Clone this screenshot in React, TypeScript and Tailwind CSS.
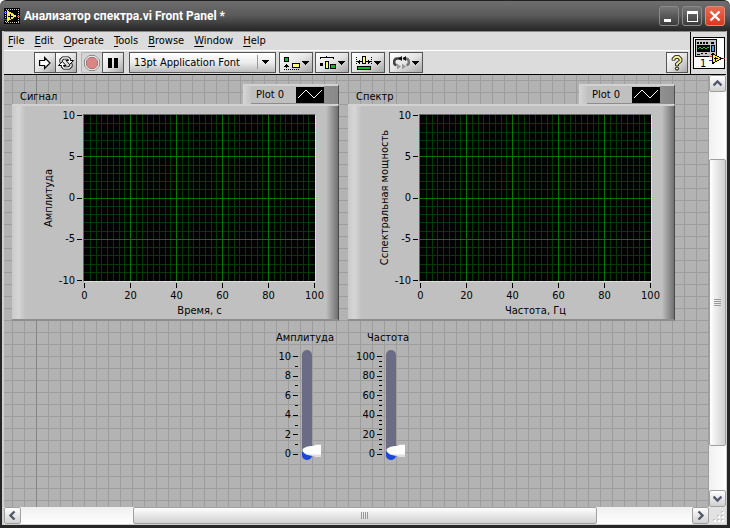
import { useState } from "react";
import type { ReactNode } from "react";
import { clsx } from "clsx";

const MENU = ["File", "Edit", "Operate", "Tools", "Browse", "Window", "Help"];

const BUTTON =
  "flex h-[21px] items-center justify-center border border-[#555] bg-linear-to-br from-white via-[#e4e4e4] to-[#a8a8a8]";

function AppIcon() {
  return (
    <svg width="16" height="16" viewBox="0 0 16 16" shapeRendering="crispEdges" aria-hidden="true">
      <path d="M0 0h16v16H0z" fill="#000" />
      <path d="M1.5 1.5h13v13h-13z" fill="none" stroke="#c8c8c8" strokeDasharray="1 1" />
      <path d="M0 4h3M0 11h3" stroke="#2040ff" />
      <path d="M13 8.5h3" stroke="#f02020" />
      <path d="M3 2v12l10-6z" fill="#ffee30" />
      <path d="M4 8h5M6.5 5.5v5" stroke="#000" />
    </svg>
  );
}

function ViIcon() {
  return (
    <svg width="32" height="32" viewBox="0 0 32 32" shapeRendering="crispEdges" aria-hidden="true">
      <path d="M.5.5h31v31H.5z" fill="#fff" stroke="#000" />
      <path d="M2.5 2.5h21v17h-21z" fill="#c4c4c4" stroke="#000" />
      <path d="M4 6h2M7 6h2M10 6h2M13 6h2M18 6h3" stroke="#000" strokeWidth="2" />
      <path d="M4 8h13v7H4z" fill="#000" />
      <path d="M5 12l2-2 2 2 2-2 2 2 2-2 1 1" fill="none" stroke="#20c030" />
      <path d="M18.5 8.5h3v6h-3z" fill="#38a0f0" stroke="#000" />
      <path d="M4 17.5h3M8 16.5h2M12 16.5h2M18 17.5h3" stroke="#000" />
      <text x="7" y="30" fontSize="11">
        1
      </text>
      <path d="M16 19.5h4M28 21.5h4" stroke="#f03020" />
      <path d="M16 23.5h4" stroke="#2030f0" />
      <path d="M19.5 16.5v10l9-5z" fill="#ffee20" stroke="#000" />
      <path d="M21 21.5h4M22.5 19.5v4" stroke="#000" />
    </svg>
  );
}

function DropArrow() {
  return (
    <svg width="7" height="4" viewBox="0 0 7 4" shapeRendering="crispEdges" aria-hidden="true">
      <path d="M0 0h7v1H0zM1 1h5v1H1zM2 2h3v1H2zM3 3h1v1H3z" fill="#000" />
    </svg>
  );
}

function RunIcon() {
  return (
    <svg width="12" height="14" viewBox="0 0 12 14" aria-hidden="true">
      <path d="M.6 4.5h5v-3L11 7l-5.400 5.500v-3h-5z" fill="#fff" stroke="#000" strokeWidth="1.200" />
    </svg>
  );
}

function RunLoopIcon() {
  return (
    <svg width="16" height="16" viewBox="0 0 16 16" aria-hidden="true">
      <path d="M3 7.500V5l2-2h5l1.500 1.500V6M13 8.500V11l-2 2H6l-1.500-1.500V10" fill="none" stroke="#000" strokeWidth="3.200" />
      <path d="M8 5.500h7.500L11.700 9.500zM.500 10.500L4.300 6.500 8 10.500z" fill="#fff" stroke="#000" />
      <path d="M3 7V5l2-2h5l1.500 1.500V7M13 9v2l-2 2H6l-1.500-1.500V9" fill="none" stroke="#fff" strokeWidth="1.400" />
    </svg>
  );
}

function AbortIcon() {
  return (
    <svg width="16" height="16" viewBox="0 0 16 16" aria-hidden="true">
      <path d="M5 .5h6L15.500 5v6L11 15.500H5L.5 11V5z" fill="#e4e4e4" stroke="#8c8c8c" />
      <path d="M5.700 2.500h4.600l3.200 3.200v4.600l-3.200 3.200H5.700l-3.200-3.200V5.700z" fill="#dc8484" stroke="#a07878" />
    </svg>
  );
}

function AlignIcon() {
  return (
    <svg width="16" height="14" viewBox="0 0 16 14" shapeRendering="crispEdges" aria-hidden="true">
      <path d="M.5 1.500h4v4h-4z" fill="#00c020" stroke="#000" />
      <path d="M8.500 7.500h7v4h-7z" fill="#ffff70" stroke="#000" />
      <path d="M2.500 8v4M1 9.500h3M0 10.500h5" stroke="#000" />
      <path d="M0 13.500h16" stroke="#000" strokeDasharray="1 1" />
    </svg>
  );
}

function DistributeIcon() {
  return (
    <svg width="16" height="14" viewBox="0 0 16 14" shapeRendering="crispEdges" aria-hidden="true">
      <path d="M.5 3V1.500h6V0M6.500 1.500h7V3" fill="none" stroke="#000" />
      <path d="M0 7h3v3H0z" fill="#000" />
      <path d="M5.500 5.500h3v7h-3z" fill="#ffff70" stroke="#000" />
      <path d="M10.500 8.500h5v4h-5z" fill="#00c020" stroke="#000" />
    </svg>
  );
}

function ResizeIcon() {
  return (
    <svg width="16" height="14" viewBox="0 0 16 14" shapeRendering="crispEdges" aria-hidden="true">
      <path d="M.5 1v8M15.500 1v8" stroke="#000" strokeDasharray="1 1" />
      <path d="M1 5.500h5M10 5.500h5M3.500 3.500v4M2.500 4.500v2M12.500 3.500v4M13.500 4.500v2" stroke="#000" />
      <path d="M6.500.5h3v7h-3z" fill="#ffff70" stroke="#000" />
      <path d="M1.500 10.500h13v3h-13z" fill="#00c020" stroke="#000" />
    </svg>
  );
}

function ReorderIcon() {
  return (
    <svg width="17" height="14" viewBox="0 0 17 14" aria-hidden="true">
      <path d="M7 2.500H5a3.500 3.500 0 0 0-1.500 6.800" fill="none" stroke="#444" strokeWidth="2.600" />
      <path d="M10 2.500h2a3.500 3.500 0 0 1 1.500 6.800" fill="none" stroke="#777" strokeWidth="2.600" />
      <path d="M9 0v5L5 2.500zM13 0v5L9.500 2.500z" fill="#111" />
      <path d="M4 7.500v6L8 10.500zM9 7.500v6l4-3z" fill="#999" />
    </svg>
  );
}

function HelpIcon() {
  return (
    <svg width="12" height="16" viewBox="0 0 12 16" aria-hidden="true">
      <path d="M2.500 5.500V4l2-2h3l2 2v2L6 9v2" fill="none" stroke="#000" strokeWidth="3.600" />
      <path d="M2.500 5V4l2-2h3l2 2v2L6 9v1.500" fill="none" stroke="#f5ee90" strokeWidth="2" />
      <circle cx="6" cy="13.500" r="1.600" fill="#f5ee90" stroke="#000" />
    </svg>
  );
}

function TitleBar() {
  const control =
    "flex h-5 w-5 items-center justify-center rounded-[3px] border border-[#8a8a8a] bg-linear-to-b from-[#777] to-[#3c3c3c]";
  return (
    <header className="flex h-[31px] shrink-0 items-center rounded-t-md border-t border-[#222] bg-linear-to-b from-[#6e6e6e] from-0% via-[#5a5a5a] via-48% to-[#262626] to-100% pr-[5px] pl-1">
      <AppIcon />
      <h1 className="ml-1 flex-1 font-[Roboto,'Noto_Sans',sans-serif] text-[12px] font-bold whitespace-nowrap text-white">
        Анализатор спектра.vi Front Panel *
      </h1>
      <div className="flex gap-[3px]">
        <button type="button" aria-label="Minimize" className={control}>
          <span className="mt-2 mr-1 h-[3px] w-[7px] bg-white" />
        </button>
        <button type="button" aria-label="Maximize" className={control}>
          <span className="h-[11px] w-[11px] border border-t-3 border-white" />
        </button>
        <button
          type="button"
          aria-label="Close"
          className="flex h-5 w-5 items-center justify-center rounded-[3px] border border-[#e08a78] bg-linear-to-b from-[#e86a50] to-[#d8381c]"
        >
          <svg width="12" height="12" viewBox="0 0 12 12" aria-hidden="true">
            <path d="M1.500 1.500l9 9M10.500 1.500l-9 9" stroke="#fff" strokeWidth="2.400" />
          </svg>
        </button>
      </div>
    </header>
  );
}

function MenuBar() {
  return (
    <nav className="flex h-[19px] items-center gap-[10px] border-b border-white pl-1">
      {MENU.map((item) => (
        <button key={item} type="button">
          <span className="underline underline-offset-2">{item[0]}</span>
          {item.slice(1)}
        </button>
      ))}
    </nav>
  );
}

function DropButton({ label, children }: { label: string; children: ReactNode }) {
  return (
    <button type="button" aria-label={label} className={clsx(BUTTON, "w-[34px] gap-[2px]")}>
      {children}
      <DropArrow />
    </button>
  );
}

function Toolbar() {
  return (
    <div className="flex h-[23px] items-center pr-[2px] pl-[30px]">
      <button type="button" aria-label="Run" className={clsx(BUTTON, "w-[22px]")}>
        <RunIcon />
      </button>
      <button type="button" aria-label="Run continuously" className={clsx(BUTTON, "-ml-px w-[22px]")}>
        <RunLoopIcon />
      </button>
      <button
        type="button"
        aria-label="Abort"
        disabled
        className="ml-1 flex h-[21px] w-[22px] items-center justify-center border border-[#b4b4b4] bg-[#d4d4d4]"
      >
        <AbortIcon />
      </button>
      <button type="button" aria-label="Pause" className={clsx(BUTTON, "-ml-px w-[22px] gap-[2px]")}>
        <span className="h-[10px] w-1 bg-black" />
        <span className="h-[10px] w-1 bg-black" />
      </button>
      <div className="relative ml-[5px]">
        <select
          aria-label="Text settings"
          className="h-[21px] w-[147px] appearance-none border border-[#555] bg-linear-to-b from-white via-[#ececec] to-[#bdbdbd] pl-1"
        >
          <option>13pt Application Font</option>
        </select>
        <span className="pointer-events-none absolute top-[3px] right-[7px] flex h-[14px] items-center border-l border-[#999] pl-1">
          <DropArrow />
        </span>
      </div>
      <div className="ml-[3px] flex gap-[2px]">
        <DropButton label="Align objects">
          <AlignIcon />
        </DropButton>
        <DropButton label="Distribute objects">
          <DistributeIcon />
        </DropButton>
        <DropButton label="Resize objects">
          <ResizeIcon />
        </DropButton>
      </div>
      <div className="ml-1 flex">
        <DropButton label="Reorder">
          <ReorderIcon />
        </DropButton>
      </div>
      <button type="button" aria-label="Context help" className={clsx(BUTTON, "ml-auto w-[22px]")}>
        <HelpIcon />
      </button>
    </div>
  );
}

const Y_TICKS = [10, 5, 0, -5, -10];
const X_TICKS = [0, 20, 40, 60, 80, 100];

function PlotGrid() {
  const cols = Array.from({ length: 41 }, (_, i) => i);
  const rows = Array.from({ length: 21 }, (_, i) => i);
  const line = (pos: number, vertical: boolean, major: boolean) => (
    <rect
      key={`${vertical}-${pos}`}
      x={vertical ? pos : 0}
      y={vertical ? 0 : pos}
      width={vertical ? 1 : 231}
      height={vertical ? 166 : 1}
      fill={major ? "#007800" : "#003c00"}
    />
  );
  const minor = (step: number) => (i: number) => i % step !== 0;
  const major = (step: number, last: number) => (i: number) => i % step === 0 && i > 0 && i < last;

  return (
    <svg width="231" height="166" shapeRendering="crispEdges" className="block bg-black" role="img" aria-label="Plot area">
      {cols.filter(minor(8)).map((i) => line(Math.round(i * 5.75), true, false))}
      {rows.filter(minor(5)).map((i) => line(Math.round(i * 8.25), false, false))}
      {cols.filter(major(8, 40)).map((i) => line(Math.round(i * 5.75), true, true))}
      {rows.filter(major(5, 20)).map((i) => line(Math.round(i * 8.25), false, true))}
    </svg>
  );
}

function Legend() {
  return (
    <div className="flex h-5 w-24 items-center border-t-2 border-r border-t-[#d2d2d2] border-r-[#505050] bg-linear-to-r from-[#d6d6d6] from-0% via-[#c0c0c0] via-10% to-[#888] to-100%">
      <div className="ml-2 flex h-full w-[73px] items-center justify-between border-b border-[#8c8c8c] bg-[#c0c0c0] pl-[5px]">
        <span>Plot 0</span>
        <svg width="28" height="16" viewBox="0 0 28 16" aria-hidden="true">
          <path d="M0 0h28v16H0z" fill="#000" />
          <path d="M2 11l8-8 8 8 8-8" fill="none" stroke="#fff" />
        </svg>
      </div>
    </div>
  );
}

interface GraphProps {
  title: string;
  xLabel: string;
  yLabel: string;
}

function Graph({ title, xLabel, yLabel }: GraphProps) {
  return (
    <section className="w-[327px] shrink-0">
      <div className="flex h-5 items-end justify-between">
        <h2 className="pl-2">{title}</h2>
        <Legend />
      </div>
      <div className="flex border-t-2 border-r border-b-2 border-t-[#d2d2d2] border-r-[#484848] border-b-[#8e8e8e] bg-[#c0c0c0]">
        <div className="w-[13px] bg-linear-to-r from-[#cacaca] via-[#d6d6d6] to-[#c2c2c2]" />
        <div className="flex flex-1 justify-end pt-2 pr-[10px] pb-px">
          <div className="flex h-[168px] w-3 items-center justify-center">
            <span className="rotate-180 leading-3 whitespace-nowrap [writing-mode:vertical-rl]">{yLabel}</span>
          </div>
          <div className="mt-px mr-px flex h-[166px] w-[27px] flex-col justify-between">
            {Y_TICKS.map((t) => (
              <div key={t} className="flex h-px items-center justify-end gap-[2px]">
                <span className="leading-3">{t}</span>
                <span className="h-px w-[5px] bg-black" />
              </div>
            ))}
          </div>
          <div>
            <div className="border border-t-[#666] border-r-[#dedede] border-b-[#dedede] border-l-[#666]">
              <PlotGrid />
            </div>
            <div className="mt-px flex justify-between px-px">
              {X_TICKS.map((t) => (
                <div key={t} className="flex w-px flex-col items-center">
                  <span className="h-[5px] w-px bg-black" />
                  <span className="leading-[15px]">{t}</span>
                </div>
              ))}
            </div>
            <p className="text-center leading-[15px]">{xLabel}</p>
          </div>
        </div>
        <div className="w-[12px] bg-linear-to-r from-[#c0c0c0] to-[#707070]" />
      </div>
    </section>
  );
}

interface SliderProps {
  id: string;
  label: string;
  max: number;
  divisions: number;
}

function Slider({ id, label, max, divisions }: SliderProps) {
  const [value, setValue] = useState(0);
  const count = 5 * divisions;
  const ticks = Array.from({ length: count + 1 }, (_, i) => count - i);
  const level = (value / max) * 98;

  return (
    <div className="w-14">
      <label htmlFor={id} className="block h-[19px] text-center leading-[14px] whitespace-nowrap">
        {label}
      </label>
      <div className="flex h-[110px]">
        <div className="mt-[6px] mr-1 flex h-[99px] w-[22px] flex-col justify-between">
          {ticks.map((i) => {
            const isMajor = i % divisions === 0;
            return (
              <div key={i} className="flex h-px items-center justify-end gap-[2px]">
                {isMajor && <span className="leading-3">{(i / count) * max}</span>}
                <span className={clsx("h-px shrink-0 bg-black", isMajor ? "w-[5px]" : "w-[3px]")} />
              </div>
            );
          })}
        </div>
        <div className="relative h-[110px] w-[10px] rounded-full bg-[#6c6b86]">
          <div
            className="absolute bottom-0 w-full rounded-b-full bg-[#1848e0]"
            style={{ height: `${level + 8}px` }}
          />
          <svg width="19" height="14" viewBox="0 0 19 14" className="absolute left-0" style={{ bottom: `${level + 2}px` }} aria-hidden="true">
            <path d="M.500 6C1 3.500 6 2 11 2L14 .800h5V13h-5l-3-1.500C6 11.500.500 9.500.500 6z" fill="#fff" />
            <path d="M2 9c3 1 6 1.500 9 1.500h8V13h-5l-3-1.500C7 11.500 4 10.800 2 9z" fill="#dedede" />
          </svg>
          <input
            id={id}
            type="range"
            min={0}
            max={max}
            value={value}
            onChange={(e) => setValue(Number(e.target.value))}
            className="absolute inset-0 h-full w-full opacity-0 [direction:rtl] [writing-mode:vertical-lr]"
          />
        </div>
      </div>
    </div>
  );
}

function ScrollArrow({ label, d }: { label: string; d: string }) {
  return (
    <button
      type="button"
      aria-label={label}
      className="flex h-[17px] w-[17px] shrink-0 items-center justify-center rounded-xs border border-[#a0a0a0] bg-linear-to-b from-white to-[#d0d0d0]"
    >
      <svg width="9" height="9" viewBox="0 0 9 9" aria-hidden="true">
        <path d={d} fill="none" stroke="#505a6c" strokeWidth="2.400" />
      </svg>
    </button>
  );
}

function VerticalScroll() {
  return (
    <div className="flex w-[17px] flex-col bg-linear-to-r from-[#f0f0f0] to-white">
      <ScrollArrow label="Scroll up" d="M.500 6.500l4-4 4 4" />
      <div className="flex-[67]" />
      <div className="flex flex-[288] flex-col items-center justify-center gap-px rounded-xs border border-[#a0a0a0] bg-linear-to-r from-white to-[#d0d0d0]">
        {[0, 1, 2, 3].map((i) => (
          <span key={i} className="h-px w-[7px] bg-[#999]" />
        ))}
      </div>
      <div className="flex-[44]" />
      <ScrollArrow label="Scroll down" d="M.500 2.500l4 4 4-4" />
    </div>
  );
}

function HorizontalScroll() {
  return (
    <div className="flex h-[17px] shrink-0 bg-linear-to-b from-[#f0f0f0] to-white">
      <ScrollArrow label="Scroll left" d="M6.500.500l-4 4 4 4" />
      <div className="flex-[112]" />
      <div className="flex h-[17px] flex-[465] items-center justify-center gap-px rounded-xs border border-[#a0a0a0] bg-linear-to-b from-white to-[#d0d0d0]">
        {[0, 1, 2, 3].map((i) => (
          <span key={i} className="h-[7px] w-px bg-[#999]" />
        ))}
      </div>
      <div className="flex-[95]" />
      <ScrollArrow label="Scroll right" d="M2.500.500l4 4-4 4" />
      <div className="flex w-[17px] items-end justify-end bg-[#e2e2e2]">
        <svg width="14" height="14" viewBox="0 0 14 14" shapeRendering="crispEdges" aria-hidden="true">
          <path d="M9 1h2v2H9zM9 5h2v2H9zM5 5h2v2H5zM9 9h2v2H9zM5 9h2v2H5zM1 9h2v2H1z" fill="#c4c4c4" />
          <path d="M10 2h2v2h-2zM10 6h2v2h-2zM6 6h2v2H6zM10 10h2v2h-2zM6 10h2v2H6zM2 10h2v2H2z" fill="#fff" />
        </svg>
      </div>
    </div>
  );
}

export default function App() {
  return (
    <div className="flex h-screen flex-col overflow-hidden bg-white font-['DejaVu_Sans_Condensed','DejaVu_Sans',sans-serif] text-[11px] leading-[14px] text-black">
      <TitleBar />
      <div className="flex min-h-0 flex-1 flex-col border-r-3 border-b-3 border-l-2 border-[#262626]">
        <div className="flex min-h-0 flex-1 flex-col border-r border-b border-l-2 border-[#d0d0d0]">
          <div className="flex shrink-0 border-t border-b border-t-[#8a8a8a] border-b-black bg-[#dcdcdc]">
            <div className="flex-1">
              <MenuBar />
              <Toolbar />
            </div>
            <div className="flex w-9 items-center justify-center border-l border-black">
              <ViIcon />
            </div>
          </div>
          <div className="flex min-h-0 flex-1">
            <main className="min-w-0 flex-1 overflow-hidden bg-[#b3b3b3] bg-[linear-gradient(#858585,#858585),linear-gradient(to_right,#9d9d9d_1px,transparent_1px),linear-gradient(to_bottom,#9d9d9d_1px,transparent_1px)] bg-size-[1px_100%,12px_12px,12px_12px] bg-position-[32px_0,8px_5px,8px_5px] [background-repeat:no-repeat,repeat,repeat] pt-[9px] pl-2">
              <div className="flex gap-[9px]">
                <Graph title="Сигнал" xLabel="Время, с" yLabel="Амплитуда" />
                <Graph title="Спектр" xLabel="Частота, Гц" yLabel="Сспектральная мощность" />
              </div>
              <div className="mt-[10px] ml-[264px] flex gap-7">
                <Slider id="amplitude" label="Амплитуда" max={10} divisions={2} />
                <Slider id="frequency" label="Частота" max={100} divisions={4} />
              </div>
            </main>
            <VerticalScroll />
          </div>
          <HorizontalScroll />
        </div>
      </div>
    </div>
  );
}
